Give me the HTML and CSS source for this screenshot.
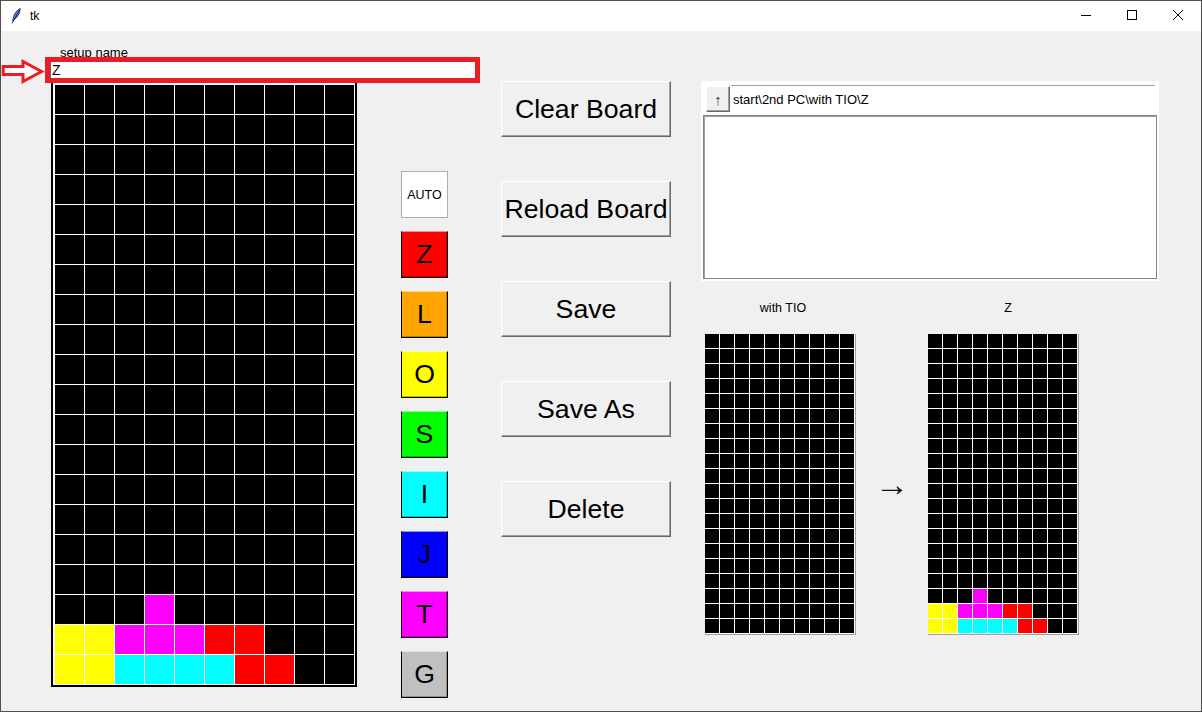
FILE: index.html
```html
<!DOCTYPE html>
<html lang="en">
<head>
<meta charset="utf-8">
<title>tk</title>
<link rel="stylesheet" href="styles.css">
</head>
<body>
<div class="window">
  <div class="titlebar">
    <svg class="app-icon" viewBox="0 0 10 16" width="10" height="16">
      <path d="M9.2 0.6 C5.6 2.2 3.2 5.6 2.2 10.2 L1.6 12.8 C3.8 11.6 6.4 9 8 5.6 C8.8 3.8 9.2 2.2 9.2 0.6 Z" fill="#5b86d6" stroke="#1c2f6b" stroke-width="0.9"/>
      <path d="M8.6 1.8 L1 15.4" stroke="#1c2f6b" stroke-width="1"/>
    </svg>
    <span class="title">tk</span>
    <div class="controls">
      <div class="ctl"><svg width="12" height="12" viewBox="0 0 12 12"><path d="M1 6.5 H11" stroke="#000" stroke-width="1"/></svg></div>
      <div class="ctl"><svg width="12" height="12" viewBox="0 0 12 12"><rect x="1.5" y="1.5" width="9" height="9" fill="none" stroke="#000" stroke-width="1"/></svg></div>
      <div class="ctl"><svg width="12" height="12" viewBox="0 0 12 12"><path d="M1 1 L11 11 M11 1 L1 11" stroke="#000" stroke-width="1"/></svg></div>
    </div>
  </div>

  <div class="content">
    <div class="head">
      <div class="label">setup name</div>
      <div class="entry">Z</div>
    </div>

    <div class="board">
      <i></i><i></i><i></i><i></i><i></i><i></i><i></i><i></i><i></i><i></i>
      <i></i><i></i><i></i><i></i><i></i><i></i><i></i><i></i><i></i><i></i>
      <i></i><i></i><i></i><i></i><i></i><i></i><i></i><i></i><i></i><i></i>
      <i></i><i></i><i></i><i></i><i></i><i></i><i></i><i></i><i></i><i></i>
      <i></i><i></i><i></i><i></i><i></i><i></i><i></i><i></i><i></i><i></i>
      <i></i><i></i><i></i><i></i><i></i><i></i><i></i><i></i><i></i><i></i>
      <i></i><i></i><i></i><i></i><i></i><i></i><i></i><i></i><i></i><i></i>
      <i></i><i></i><i></i><i></i><i></i><i></i><i></i><i></i><i></i><i></i>
      <i></i><i></i><i></i><i></i><i></i><i></i><i></i><i></i><i></i><i></i>
      <i></i><i></i><i></i><i></i><i></i><i></i><i></i><i></i><i></i><i></i>
      <i></i><i></i><i></i><i></i><i></i><i></i><i></i><i></i><i></i><i></i>
      <i></i><i></i><i></i><i></i><i></i><i></i><i></i><i></i><i></i><i></i>
      <i></i><i></i><i></i><i></i><i></i><i></i><i></i><i></i><i></i><i></i>
      <i></i><i></i><i></i><i></i><i></i><i></i><i></i><i></i><i></i><i></i>
      <i></i><i></i><i></i><i></i><i></i><i></i><i></i><i></i><i></i><i></i>
      <i></i><i></i><i></i><i></i><i></i><i></i><i></i><i></i><i></i><i></i>
      <i></i><i></i><i></i><i></i><i></i><i></i><i></i><i></i><i></i><i></i>
      <i></i><i></i><i></i><i class="m"></i><i></i><i></i><i></i><i></i><i></i><i></i>
      <i class="y"></i><i class="y"></i><i class="m"></i><i class="m"></i><i class="m"></i><i class="r"></i><i class="r"></i><i></i><i></i><i></i>
      <i class="y"></i><i class="y"></i><i class="c"></i><i class="c"></i><i class="c"></i><i class="c"></i><i class="r"></i><i class="r"></i><i></i><i></i>
    </div>

    <div class="pieces">
      <div class="pc auto">AUTO</div>
      <div class="pc pz">Z</div>
      <div class="pc pl">L</div>
      <div class="pc po">O</div>
      <div class="pc ps">S</div>
      <div class="pc pi">I</div>
      <div class="pc pj">J</div>
      <div class="pc pt">T</div>
      <div class="pc pg">G</div>
    </div>

    <div class="actions">
      <div class="btn">Clear Board</div>
      <div class="btn">Reload Board</div>
      <div class="btn">Save</div>
      <div class="btn">Save As</div>
      <div class="btn">Delete</div>
    </div>

    <div class="side">
      <div class="browser">
        <div class="pathrow">
          <div class="up">↑</div>
          <div class="path">start\2nd PC\with TIO\Z</div>
        </div>
        <div class="list"></div>
      </div>

      <div class="captions">
        <div class="cap cap1">with TIO</div>
        <div class="cap-gap"></div>
        <div class="cap cap2">Z</div>
      </div>

      <div class="minis">
        <div class="mini">
          <i></i><i></i><i></i><i></i><i></i><i></i><i></i><i></i><i></i><i></i>
          <i></i><i></i><i></i><i></i><i></i><i></i><i></i><i></i><i></i><i></i>
          <i></i><i></i><i></i><i></i><i></i><i></i><i></i><i></i><i></i><i></i>
          <i></i><i></i><i></i><i></i><i></i><i></i><i></i><i></i><i></i><i></i>
          <i></i><i></i><i></i><i></i><i></i><i></i><i></i><i></i><i></i><i></i>
          <i></i><i></i><i></i><i></i><i></i><i></i><i></i><i></i><i></i><i></i>
          <i></i><i></i><i></i><i></i><i></i><i></i><i></i><i></i><i></i><i></i>
          <i></i><i></i><i></i><i></i><i></i><i></i><i></i><i></i><i></i><i></i>
          <i></i><i></i><i></i><i></i><i></i><i></i><i></i><i></i><i></i><i></i>
          <i></i><i></i><i></i><i></i><i></i><i></i><i></i><i></i><i></i><i></i>
          <i></i><i></i><i></i><i></i><i></i><i></i><i></i><i></i><i></i><i></i>
          <i></i><i></i><i></i><i></i><i></i><i></i><i></i><i></i><i></i><i></i>
          <i></i><i></i><i></i><i></i><i></i><i></i><i></i><i></i><i></i><i></i>
          <i></i><i></i><i></i><i></i><i></i><i></i><i></i><i></i><i></i><i></i>
          <i></i><i></i><i></i><i></i><i></i><i></i><i></i><i></i><i></i><i></i>
          <i></i><i></i><i></i><i></i><i></i><i></i><i></i><i></i><i></i><i></i>
          <i></i><i></i><i></i><i></i><i></i><i></i><i></i><i></i><i></i><i></i>
          <i></i><i></i><i></i><i></i><i></i><i></i><i></i><i></i><i></i><i></i>
          <i></i><i></i><i></i><i></i><i></i><i></i><i></i><i></i><i></i><i></i>
          <i></i><i></i><i></i><i></i><i></i><i></i><i></i><i></i><i></i><i></i>
        </div>
        <div class="arrow">→</div>
        <div class="mini">
          <i></i><i></i><i></i><i></i><i></i><i></i><i></i><i></i><i></i><i></i>
          <i></i><i></i><i></i><i></i><i></i><i></i><i></i><i></i><i></i><i></i>
          <i></i><i></i><i></i><i></i><i></i><i></i><i></i><i></i><i></i><i></i>
          <i></i><i></i><i></i><i></i><i></i><i></i><i></i><i></i><i></i><i></i>
          <i></i><i></i><i></i><i></i><i></i><i></i><i></i><i></i><i></i><i></i>
          <i></i><i></i><i></i><i></i><i></i><i></i><i></i><i></i><i></i><i></i>
          <i></i><i></i><i></i><i></i><i></i><i></i><i></i><i></i><i></i><i></i>
          <i></i><i></i><i></i><i></i><i></i><i></i><i></i><i></i><i></i><i></i>
          <i></i><i></i><i></i><i></i><i></i><i></i><i></i><i></i><i></i><i></i>
          <i></i><i></i><i></i><i></i><i></i><i></i><i></i><i></i><i></i><i></i>
          <i></i><i></i><i></i><i></i><i></i><i></i><i></i><i></i><i></i><i></i>
          <i></i><i></i><i></i><i></i><i></i><i></i><i></i><i></i><i></i><i></i>
          <i></i><i></i><i></i><i></i><i></i><i></i><i></i><i></i><i></i><i></i>
          <i></i><i></i><i></i><i></i><i></i><i></i><i></i><i></i><i></i><i></i>
          <i></i><i></i><i></i><i></i><i></i><i></i><i></i><i></i><i></i><i></i>
          <i></i><i></i><i></i><i></i><i></i><i></i><i></i><i></i><i></i><i></i>
          <i></i><i></i><i></i><i></i><i></i><i></i><i></i><i></i><i></i><i></i>
          <i></i><i></i><i></i><i class="m"></i><i></i><i></i><i></i><i></i><i></i><i></i>
          <i class="y"></i><i class="y"></i><i class="m"></i><i class="m"></i><i class="m"></i><i class="r"></i><i class="r"></i><i></i><i></i><i></i>
          <i class="y"></i><i class="y"></i><i class="c"></i><i class="c"></i><i class="c"></i><i class="c"></i><i class="r"></i><i class="r"></i><i></i><i></i>
        </div>
      </div>
    </div>
  </div>

  <div class="mark-box"></div>
  <svg class="mark-arrow" width="46" height="28" viewBox="0 0 46 28">
    <polygon points="2.2,9.5 22,9.5 22,4.5 40.5,14.5 22,24.5 22,17.5 2.2,17.5" fill="#fff" stroke="#ed1c24" stroke-width="3" stroke-linejoin="miter"/>
  </svg>
</div>
</body>
</html>
```

FILE: styles.css
```css
* { box-sizing: border-box; }
html, body { margin: 0; padding: 0; background: #fff; }
body { font-family: "Liberation Sans", Arial, sans-serif; color: #000; }

.window {
  position: relative;
  width: 1202px;
  height: 712px;
  border: 1px solid #505050;
  background: #f0f0f0;
  display: flex;
  flex-direction: column;
  overflow: hidden;
}

/* title bar */
.titlebar {
  flex: none;
  height: 30px;
  background: #fff;
  display: flex;
  align-items: center;
}
.app-icon { margin-left: 10px; margin-top: -1px; }
.title { font-size: 12px; margin-left: 9px; margin-top: -1px; }
.controls { margin-left: auto; display: flex; height: 100%; }
.ctl {
  width: 46px;
  height: 30px;
  display: flex;
  align-items: center;
  justify-content: center;
  padding-bottom: 3px;
}

/* content grid */
.content {
  flex: 1;
  display: grid;
  grid-template-columns: 306px 44px 47px 53px 170px 30px 458px;
  grid-template-rows: 50px 1fr;
  padding-left: 50px;
}

.head { grid-column: 1 / 5; grid-row: 1; padding-left: 9px; }
.label { font-size: 13px; line-height: 13px; margin-top: 15px; }
.entry {
  margin-left: -10px;
  width: 429px;
  height: 22px;
  background: #fff;
  border-left: 1px solid #646464;
  font-size: 14px;
  line-height: 22px;
  padding-left: 1px;
}

/* main board */
.board {
  grid-column: 1;
  grid-row: 2;
  align-self: start;
  width: 306px;
  border: 2px solid #000;
  padding: 2px 1px 1px 2px;
  background: #fff;
  display: grid;
  grid-template-columns: repeat(10, 29px);
  grid-auto-rows: 29px;
  gap: 1px;
}
.board i, .mini i { display: block; background: #000; }
.board i.y, .mini i.y { background: #ffff00; }
.board i.m, .mini i.m { background: #ff00ff; }
.board i.r, .mini i.r { background: #ff0000; }
.board i.c, .mini i.c { background: #00ffff; }

/* piece buttons */
.pieces {
  grid-column: 3;
  grid-row: 2;
  padding-top: 90px;
  display: flex;
  flex-direction: column;
  gap: 13px;
}
.pc {
  width: 47px;
  height: 47px;
  display: flex;
  align-items: center;
  justify-content: center;
  font-size: 26.67px;
  border: 1px solid #000;
  border-top-color: rgba(255, 255, 255, 0.55);
  box-shadow: inset -1px -1px rgba(0, 0, 0, 0.25);
}
.pc.auto {
  background: #fff;
  border: 1px solid #adadad;
  box-shadow: none;
  font-size: 12.5px;
}
.pz { background: #ff0000; }
.pl { background: #ffa500; }
.po { background: #ffff00; }
.ps { background: #00ff00; }
.pi { background: #00ffff; }
.pj { background: #0000ff; }
.pt { background: #ff00ff; }
.pg { background: #c0c0c0; }

/* action buttons */
.actions {
  grid-column: 5;
  grid-row: 1 / 3;
  padding-top: 50px;
  display: flex;
  flex-direction: column;
  gap: 44px;
}
.btn {
  width: 170px;
  height: 56px;
  background: #f0f0f0;
  border: 1px solid;
  border-color: #fff #696969 #696969 #fff;
  box-shadow: inset -1px -1px #a0a0a0;
  display: flex;
  align-items: center;
  justify-content: center;
  font-size: 26.67px;
  white-space: nowrap;
}

/* right side */
.side {
  grid-column: 7;
  grid-row: 1 / 3;
  padding-top: 50px;
  display: flex;
  flex-direction: column;
}
.browser {
  height: 200px;
  background: #fff;
  padding: 4px 2px 2px;
}
.pathrow { display: flex; height: 28px; margin: 0 2px 0 3px; }
.up {
  width: 24px;
  height: 26px;
  margin-top: 1px;
  background: #f0f0f0;
  border: 1px solid;
  border-color: #fff #696969 #696969 #fff;
  box-shadow: inset -1px -1px #a0a0a0;
  display: flex;
  align-items: center;
  justify-content: center;
  font-family: "Liberation Sans", "DejaVu Sans", sans-serif;
  font-size: 15px;
  color: #4a3a10;
  padding-top: 1px;
}
.path {
  flex: 1;
  margin-left: 1px;
  border-top: 1px solid #a0a0a0;
  height: 28px;
  line-height: 27px;
  padding-left: 2px;
  font-size: 13px;
  white-space: nowrap;
}
.list {
  margin-top: 2px;
  height: 164px;
  background: #fff;
  border: 1px solid #828282;
  box-shadow: inset 1px 1px #a0a0a0;
}

.captions { display: flex; margin-top: 20px; padding-left: 4px; height: 15px; }
.cap { width: 151px; text-align: center; font-size: 12.5px; line-height: 15px; }
.cap1 { padding-left: 5px; }
.cap2 { padding-left: 9px; }
.cap-gap { width: 72px; }

.minis { display: flex; margin-top: 18px; padding-left: 4px; }
.mini {
  width: 151px;
  display: grid;
  grid-template-columns: repeat(10, 14px);
  grid-auto-rows: 14px;
  gap: 1px;
  background: #fff;
  padding: 0 1px 1px 0;
  border-right: 1px solid #a0a0a0;
  border-bottom: 1px solid #a0a0a0;
}
.arrow {
  width: 72px;
  display: flex;
  align-items: center;
  justify-content: center;
  font-family: "Liberation Sans", "DejaVu Sans", sans-serif;
  font-size: 34px;
  color: #111;
  padding-top: 0;
}

/* annotation overlays */
.mark-box {
  position: absolute;
  left: 44px;
  top: 56px;
  width: 435px;
  height: 26px;
  border: 5px solid #ed1c24;
}
.mark-arrow {
  position: absolute;
  left: 0;
  top: 56px;
}
```
